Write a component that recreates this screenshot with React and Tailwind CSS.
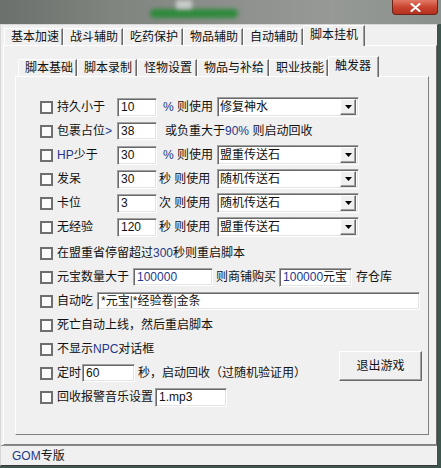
// Trigger settings window (脚本挂机 / 触发器)
const SUNKEN = 'border border-t-[#a0a0a0] border-l-[#a0a0a0] border-r-white border-b-white shadow-[inset_1px_1px_0_#696969,inset_-1px_-1px_0_#e3e3e3] bg-white'
const RAISED = 'border border-t-white border-l-white border-r-[#696969] border-b-[#696969] shadow-[inset_-1px_-1px_0_#a0a0a0] bg-[#f0f0f0]'

const MAIN_TABS = [
  { label: '基本加速', w: 59 },
  { label: '战斗辅助', w: 60 },
  { label: '吃药保护', w: 60 },
  { label: '物品辅助', w: 60 },
  { label: '自动辅助', w: 60 },
  { label: '脚本挂机', w: 62, active: true },
]

const SUB_TABS = [
  { label: '脚本基础', w: 59 },
  { label: '脚本录制', w: 60 },
  { label: '怪物设置', w: 60 },
  { label: '物品与补给', w: 72 },
  { label: '职业技能', w: 59 },
  { label: '触发器', w: 51, active: true },
]

const USE_ROWS = [
  { label: '持久小于', val: '10', unit: '%', item: '修复神水' },
  { label: 'HP少于', val: '30', unit: '%', item: '盟重传送石' },
  { label: '发呆', val: '30', unit: '秒', item: '随机传送石' },
  { label: '卡位', val: '3', unit: '次', item: '随机传送石' },
  { label: '无经验', val: '120', unit: '秒', item: '盟重传送石' },
]

function B({ children }) {
  return <span className="text-[#24388a]">{children}</span>
}

function Tab({ label, w, active }) {
  return (
    <div
      style={{ width: w }}
      className={`flex items-center pl-[6px] border-t border-l border-white border-r border-r-[#696969] shadow-[inset_-1px_0_0_#a0a0a0] rounded-tl-[2px] whitespace-nowrap ${
        active ? 'h-[21px] -mb-px relative z-10 bg-[#f0f0f0] pb-[3px]' : 'h-[17px]'
      }`}
    >
      {label}
    </div>
  )
}

function Check() {
  return <span className="w-[13px] h-[13px] border-2 border-[#6f6f6f] bg-[#fbfbfb] shrink-0" />
}

function Field({ w, h = 18, children, className = '' }) {
  return (
    <div style={{ width: w, height: h }} className={`${SUNKEN} flex items-center pl-[3px] pb-px shrink-0 whitespace-nowrap ${className}`}>
      {children}
    </div>
  )
}

function Select({ value }) {
  return (
    <div className={`${SUNKEN} w-[142px] h-[20px] flex items-center justify-between pl-[2px] pr-[2px] shrink-0`}>
      <span>{value}</span>
      <div className={`${RAISED} w-[16px] h-[16px] flex items-center justify-center`}>
        <svg width="7" height="4" viewBox="0 0 7 4"><path d="M0 0h7L3.5 4z" fill="#000" /></svg>
      </div>
    </div>
  )
}

function Row({ children, className = '' }) {
  return <div className={`h-[24px] flex items-center whitespace-nowrap ${className}`}>{children}</div>
}

export default function App() {
  return (
    <div className="w-[441px] h-[468px] bg-[#3d554c] flex flex-col overflow-hidden text-[12px] leading-none text-[#111] font-['Liberation_Sans','Noto_Sans_CJK_SC',sans-serif]">
      {/* background strip above window */}
      <div className="relative h-[24px] shrink-0 flex justify-end pr-[3px] bg-[linear-gradient(90deg,#6b706c_0%,#80847f_25%,#8c8f8b_50%,#969995_75%,#8a918c_100%)]">
        <div className="absolute left-[150px] top-[9px] w-[88px] h-[9px] rounded-full bg-[#2e8a3c] blur-[2px]" />
        <div className="absolute left-[176px] top-0 w-[16px] h-[9px] bg-[#c9cdca] blur-[2px]" />
        <div className="w-[46px] h-[15px] rounded-b-[4px] border border-t-0 border-[#6e2218] bg-[linear-gradient(180deg,#e07a66_0%,#c8412c_55%,#b23220_100%)] flex items-center justify-center relative z-10">
          <svg width="11" height="9" viewBox="0 0 11 9">
            <path d="M1.5 1l8 7M9.5 1l-8 7" stroke="#fff" strokeWidth="2.2" strokeLinecap="round" />
          </svg>
        </div>
      </div>

      {/* window body */}
      <div className="w-[438px] h-[442px] bg-[#f0f0f0] border-t border-l border-[#d8d8d8] border-r border-r-[#4a4a4a] border-b border-b-[#3a3a3a] flex flex-col">
        {/* main tabs */}
        <div className="h-[20px] flex items-end pl-[3px] shrink-0">
          {MAIN_TABS.map(t => <Tab key={t.label} {...t} />)}
        </div>

        {/* main panel */}
        <div className={`ml-[2px] w-[434px] h-[400px] ${RAISED} border-b-[#808080] shadow-none pt-[10px] pl-[11px]`}>
          {/* sub tabs */}
          <div className="h-[20px] flex items-end pl-[3px]">
            {SUB_TABS.map(t => <Tab key={t.label} {...t} />)}
          </div>

          {/* sub panel */}
          <div className={`w-[414px] h-[359px] ${RAISED} border-r-[#808080] border-b-[#808080] shadow-none pt-[18px] pl-[24px]`}>
            {USE_ROWS.slice(0, 1).map(r => (
              <Row key={r.label}>
                <Check />
                <span className="ml-[4px] w-[60px]">{r.label}</span>
                <Field w={40} h={19}>{r.val}</Field>
                <span className="w-[60px] pl-[6px]"><B>%</B> 则使用</span>
                <Select value={r.item} />
              </Row>
            ))}
            <Row>
              <Check />
              <span className="ml-[4px] w-[60px]">包裹占位<B>&gt;</B></span>
              <Field w={40}>38</Field>
              <span className="ml-[8px]">或负重大于<B>90%</B> 则启动回收</span>
            </Row>
            {USE_ROWS.slice(1).map(r => (
              <Row key={r.label + r.item}>
                <Check />
                <span className="ml-[4px] w-[60px]">
                  {r.label.startsWith('HP') ? <><B>HP</B>少于</> : r.label}
                </span>
                <Field w={40} h={19}>{r.val}</Field>
                {r.unit === '%'
                  ? <span className="w-[60px] pl-[6px]"><B>%</B> 则使用</span>
                  : <span className="w-[60px] pl-[2px]">{r.unit} 则使用</span>}
                <Select value={r.item} />
              </Row>
            ))}

            <Row className="mt-[2px]">
              <Check />
              <span className="ml-[4px]">在盟重省停留超过<B>300</B>秒则重启脚本</span>
            </Row>
            <Row>
              <Check />
              <span className="ml-[4px]">元宝数量大于</span>
              <Field w={80} className="ml-[4px]"><B>100000</B></Field>
              <span className="ml-[3px]">则商铺购买</span>
              <Field w={73} h={19} className="ml-[3px]"><B>100000</B>元宝</Field>
              <span className="ml-[4px]">存仓库</span>
            </Row>
            <Row>
              <Check />
              <span className="ml-[4px]">自动吃</span>
              <Field w={323} className="ml-[4px]">*元宝<B>|</B>*经验卷<B>|</B>金条</Field>
            </Row>
            <Row>
              <Check />
              <span className="ml-[4px]">死亡自动上线，然后重启脚本</span>
            </Row>

            <div className="flex">
              <div className="flex flex-col">
                <Row>
                  <Check />
                  <span className="ml-[4px]">不显示<B>NPC</B>对话框</span>
                </Row>
                <Row>
                  <Check />
                  <span className="ml-[4px]">定时</span>
                  <Field w={53} className="ml-[1px]">60</Field>
                  <span className="ml-[3px]">秒，启动回收（过随机验证用）</span>
                </Row>
              </div>
              <button className={`${RAISED} border-[#a0a0a0] ml-auto mr-[6px] mt-[14px] w-[83px] h-[30px] flex items-center justify-center`}>
                退出游戏
              </button>
            </div>

            <Row>
              <Check />
              <span className="ml-[4px]">回收报警音乐设置</span>
              <Field w={72} h={19} className="ml-[2px]">1.mp3</Field>
            </Row>
          </div>
        </div>

        {/* status bar */}
        <div className="h-[20px] flex items-center pl-[11px] border-t border-[#8a8a8a] shrink-0">
          <B>GOM</B>专版
        </div>
      </div>
    </div>
  )
}
